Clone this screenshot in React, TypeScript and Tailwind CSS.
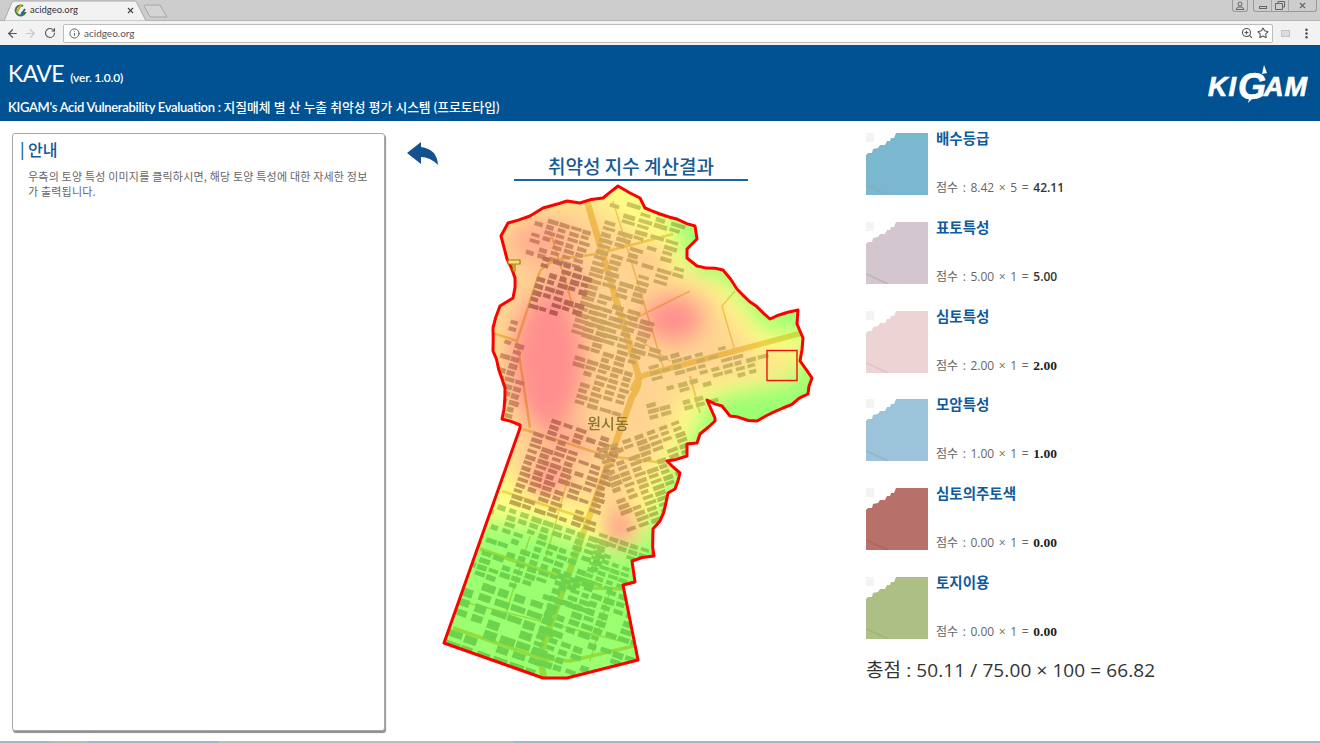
import { ArrowLeft, ArrowRight, Info, MoreVertical, RotateCw, Star, X, ZoomIn } from "lucide-react";

const outlinePts =
  "618,185 630,192 640,197 645,207 660,213 677,218 695,225 697,238 687,248 687,257 697,265 723,269 737,288 770,318 798,309 797,323 803,337 800,360 812,377 808,393 783,407 757,420 730,415 722,405 707,399 715,417 715,420 700,433 697,442 687,443 687,455 667,460 680,472 675,488 668,492 660,520 653,528 654,555 632,560 635,581 623,584 638,659 567,677 543,677 444,642 520,427 520,424 502,418 505,387 493,350 493,327 500,305 513,297 515,277 507,258 501,235 508,222 530,215 543,207 567,200 580,202 603,197"
    .split(" ")
    .map((p) => p.split(",").map(Number));

// small fixed-seed generator so the map stays the same between runs
function makeRandom(start: number) {
  let seed = start;
  return () => {
    seed = (seed * 16807) % 2147483647;
    return seed / 2147483647;
  };
}

// the boundary is hand-traced and a bit too clean, so roughen the northern part
function roughen() {
  const rnd = makeRandom(41);
  const out: string[] = [];
  outlinePts.forEach(([x, y], i) => {
    const [nx, ny] = outlinePts[(i + 1) % outlinePts.length];
    out.push(`${x},${y}`);
    const len = Math.hypot(nx - x, ny - y);
    if (y > 560 || ny > 560 || len < 12) return;
    const steps = Math.floor(len / 8);
    for (let s = 1; s < steps; s++) {
      const t = s / steps;
      out.push(`${(x + (nx - x) * t + (rnd() - 0.5) * 2.4).toFixed(1)},${(y + (ny - y) * t + (rnd() - 0.5) * 2.4).toFixed(1)}`);
    }
  });
  return out.join(" ");
}
const outline = roughen();

type Bld = { x: number; y: number; w: number; h: number; a: number; tone: string };

function makeBuildings() {
  const rnd = makeRandom(17);
  const out: Bld[] = [];
  const fill = (
    x0: number,
    y0: number,
    x1: number,
    y1: number,
    a: number,
    cw: number,
    ch: number,
    tone: string,
    skip = 0.2,
  ) => {
    const cx = (x0 + x1) / 2;
    const cy = (y0 + y1) / 2;
    const r = (a * Math.PI) / 180;
    for (let y = y0; y < y1; y += ch) {
      for (let x = x0; x < x1; x += cw) {
        if (rnd() < skip) continue;
        const w = cw * (0.6 + rnd() * 0.34);
        const h = ch * (0.55 + rnd() * 0.25);
        const dx = x + w / 2 - cx;
        const dy = y + h / 2 - cy;
        const px = cx + dx * Math.cos(r) - dy * Math.sin(r);
        const py = cy + dx * Math.sin(r) + dy * Math.cos(r);
        // open ground under the big hot spots, the village label and the east side
        if (px > 520 && px < 577 && py > 312 && py < 408) continue;
        if (px > 648 && px < 700 && py > 285 && py < 345) continue;
        if (px > 585 && px < 632 && py > 413 && py < 433) continue;
        if (px > 680 && py < 345) continue;
        if (px > 770) continue;
        if (px > 715 && py > 378) continue;
        out.push({ x: px - w / 2, y: py - h / 2, w, h, a, tone });
      }
    }
  };
  fill(590, 205, 672, 345, 17, 16, 6, "#cfc8ac");
  fill(530, 222, 590, 262, 17, 12, 6, "#cdb6ae");
  fill(535, 262, 590, 312, 17, 11, 7, "#b89c96");
  fill(496, 320, 522, 420, 17, 11, 7, "#cbb4ac");
  fill(575, 310, 640, 410, 17, 13, 6, "#ccc2a6");
  fill(640, 345, 770, 400, -15, 12, 6, "#ccceaa", 0.42);
  fill(522, 425, 610, 520, 19, 13, 6, "#c4aa9e");
  fill(610, 432, 692, 520, -20, 13, 6, "#ccc2a2");
  fill(472, 518, 600, 590, 19, 12, 7, "#b3d3a9");
  fill(590, 540, 650, 590, 19, 11, 6, "#bcd6a8");
  fill(450, 588, 540, 680, 19, 17, 11, "#b3d3a9");
  fill(540, 585, 640, 680, 19, 13, 8, "#b3d3a9");
  return out;
}
const buildings = makeBuildings();

const roads: { d: string; w: number }[] = [
  { d: "M587 200 L638 373 Q641 384 632 396 L540 653 L544 678", w: 6.5 },
  { d: "M802 332 L645 374 Q636 377 632 390", w: 5.5 },
  { d: "M480 548 L593 587 L622 588", w: 3.5 },
  { d: "M453 627 L543 658 L570 660 L634 645", w: 3.5 },
  { d: "M502 490 L587 518", w: 2.5 },
  { d: "M523 428 L607 455 L665 462", w: 2.5 },
  { d: "M540 270 Q546 262 560 258 L597 253 L673 233", w: 2.5 },
  { d: "M493 332 L517 340 L540 270", w: 2.5 },
  { d: "M517 340 L530 427", w: 2.5 },
  { d: "M550 230 L575 312", w: 2 },
  { d: "M613 200 L665 372", w: 1.5 },
  { d: "M630 320 L690 290", w: 1.5 },
  { d: "M641 340 L670 360", w: 1.5 },
  { d: "M735 290 L722 305 L735 350", w: 1.5 },
  { d: "M690 375 L700 412", w: 2 },
  { d: "M570 470 L545 560", w: 1.5 },
  { d: "M530 535 L505 615", w: 1.5 },
  { d: "M610 590 L590 660", w: 1.5 },
  { d: "M460 600 L620 640", w: 1.5 },
];

function HeatMap() {
  return (
    <svg viewBox="440 180 376 502" className="w-[376px] h-[502px] block">
      <defs>
        <clipPath id="area">
          <polygon points={outline} />
        </clipPath>
        <filter id="b14" x="-30%" y="-30%" width="160%" height="160%">
          <feGaussianBlur stdDeviation="14" />
        </filter>
        <filter id="b9" x="-30%" y="-30%" width="160%" height="160%">
          <feGaussianBlur stdDeviation="11" />
        </filter>
      </defs>
      <g clipPath="url(#area)">
        <rect x="440" y="180" width="376" height="502" fill="#9cff72" />
        <polygon
          filter="url(#b9)"
          fill="#ffff84"
          points="480,225 560,178 625,170 672,212 682,245 695,275 725,278 765,330 815,330 795,378 740,388 708,398 695,430 672,470 660,510 632,548 590,545 540,525 480,520 470,450 470,330"
        />
        <polygon
          filter="url(#b14)"
          fill="#ffd492"
          points="490,225 570,190 605,205 640,240 668,268 712,288 752,345 775,372 720,378 682,395 668,440 640,480 626,525 592,505 540,490 505,470 490,400 480,320"
        />
        <g filter="url(#b9)" fill="#ff8e8e">
          <ellipse cx="548" cy="360" rx="36" ry="68" />
          <ellipse cx="673" cy="318" rx="29" ry="22" />
          <ellipse cx="652" cy="255" rx="14" ry="9" opacity="0.5" />
          <ellipse cx="540" cy="240" rx="32" ry="22" opacity="0.55" />
          <ellipse cx="565" cy="285" rx="24" ry="22" opacity="0.55" />
          <ellipse cx="548" cy="478" rx="20" ry="14" />
          <ellipse cx="620" cy="526" rx="14" ry="18" />
          <ellipse cx="565" cy="440" rx="30" ry="18" opacity="0.5" />
          <ellipse cx="780" cy="362" rx="12" ry="10" opacity="0.35" />
        </g>
        <g style={{ mixBlendMode: "multiply" }}>
          {roads.map((r) => (
            <path key={r.d} d={r.d} fill="none" stroke="#efdc8a" strokeWidth={r.w} strokeLinejoin="round" />
          ))}
          {buildings.map((b, i) => (
            <rect
              key={i}
              x={b.x}
              y={b.y}
              width={b.w}
              height={b.h}
              fill={b.tone}
              transform={`rotate(${b.a} ${b.x + b.w / 2} ${b.y + b.h / 2})`}
            />
          ))}
        </g>
      </g>
      <polygon points={outline} fill="none" stroke="#ff0000" strokeWidth="3" strokeLinejoin="round" />
      <path d="M508 259 H520 V263 H515 V270 H513 V263 H508 Z" fill="#f5e27a" stroke="#a37a12" strokeWidth="1.2" />
      <text
        x="608"
        y="428"
        textAnchor="middle"
        fontSize="15"
        fontWeight="500"
        fill="#8a7630"
        style={{ fontFamily: '"Noto Sans CJK KR", sans-serif' }}
      >
        원시동
      </text>
      <rect x="767" y="349.5" width="30" height="30" fill="none" stroke="#f01010" strokeWidth="1.4" />
    </svg>
  );
}

function Thumb({ color, line }: { color: string; line: string }) {
  return (
    <svg viewBox="0 0 62 62" className="w-[62px] h-[62px] shrink-0">
      <rect width="8" height="9" fill="#f3f3f3" />
      <polygon
        points="0,22 2,20 6,20 7,16 12,15 14,12 19,12 21,8 24,8 25,5 28,5 30,0 62,0 62,62 0,62"
        fill={color}
      />
      <path d="M0 52 L22 62" stroke={line} strokeWidth="1.5" opacity="0.7" />
    </svg>
  );
}

const layers = [
  { name: "배수등급", color: "#7ab8d0", line: "#8aa9b5", formula: "8.42 × 5 = ", total: "42.11", serif: false },
  { name: "표토특성", color: "#d3c6ce", line: "#c0a9b0", formula: "5.00 × 1 = ", total: "5.00", serif: false },
  { name: "심토특성", color: "#edd4d4", line: "#e0bcbc", formula: "2.00 × 1 = ", total: "2.00", serif: true },
  { name: "모암특성", color: "#9bc4da", line: "#8db0c4", formula: "1.00 × 1 = ", total: "1.00", serif: true },
  { name: "심토의주토색", color: "#b8716a", line: "#ae5e55", formula: "0.00 × 1 = ", total: "0.00", serif: true },
  { name: "토지이용", color: "#aebf85", line: "#9cb070", formula: "0.00 × 1 = ", total: "0.00", serif: true },
];

function BrowserChrome() {
  return (
    <div className="shrink-0">
      <div className="h-[21px] bg-[#cdcdcd] relative border-b border-[#b4b4b4]">
        <svg className="absolute left-0 top-0" width="175" height="21">
          <path d="M4 21 L12 2 Q13 1 15 1 H134 Q136 1 137 3 L146 21 Z" fill="#f2f2f2" stroke="#a8a8a8" />
          <path d="M144 6 Q144 5 146 5 H160 L167 17 H150 Z" fill="#d4d4d4" stroke="#a6a6a6" />
          <path d="M23 6 A5 5 0 1 0 25 13 H21" fill="none" stroke="#3b7d3a" strokeWidth="2" />
          <path d="M17 12 L21 5" stroke="#d8a020" strokeWidth="2" />
          <path d="M21 15 L25 9" stroke="#2f5fb0" strokeWidth="2" />
        </svg>
        <span className="absolute left-[30px] top-[3px] text-[9.5px] leading-[14px] text-[#333]">acidgeo.org</span>
        <X className="absolute left-[126px] top-[6px] w-[9px] h-[9px] text-[#444]" strokeWidth={3} />
        <div className="absolute right-[72px] top-0 w-[16px] h-[12px] border border-t-0 border-[#9a9a9a] rounded-b-[3px] flex items-center justify-center">
          <svg width="10" height="9" viewBox="0 0 10 9">
            <circle cx="5" cy="3" r="2" fill="none" stroke="#666" />
            <path d="M1 8.5 H9 L7 6 H3 Z" fill="none" stroke="#666" />
          </svg>
        </div>
        <div className="absolute right-[3px] top-0 h-[12px] w-[64px] border border-t-0 border-[#9a9a9a] rounded-b-[3px] flex items-center">
          <div className="w-[18px] h-full border-r border-[#a6a6a6] flex items-end justify-center pb-[2px]">
            <div className="w-[8px] h-[3px] border border-[#666]" />
          </div>
          <div className="w-[17px] h-full border-r border-[#a6a6a6] flex items-center justify-center">
            <svg width="10" height="9" viewBox="0 0 10 9">
              <path d="M3 2 V.5 H9.5 V6 H8 M.5 2.5 H7.5 V8.5 H.5 Z" fill="none" stroke="#666" />
            </svg>
          </div>
          <div className="flex-1 flex items-center justify-center">
            <X className="w-[9px] h-[9px] text-[#666]" strokeWidth={3} />
          </div>
        </div>
      </div>
      <div className="h-[24px] bg-[#f2f2f2] flex items-center pl-[6px] pr-[7px]">
        <ArrowLeft className="w-[13px] h-[13px] text-[#555]" strokeWidth={2.2} />
        <ArrowRight className="w-[13px] h-[13px] text-[#c9c9c9] ml-[5px]" strokeWidth={2.2} />
        <RotateCw className="w-[12px] h-[12px] text-[#555] ml-[7px]" strokeWidth={2.2} />
        <div className="w-[1210px] h-[19px] ml-[7px] bg-white border border-[#bdbdbd] rounded-[2px] flex items-center pl-[5px] pr-[3px]">
          <Info className="w-[11px] h-[11px] text-[#555]" />
          <span className="text-[10px] text-[#555] ml-[4px]">acidgeo.org</span>
          <ZoomIn className="w-[12px] h-[12px] text-[#555] ml-auto" strokeWidth={2.2} />
          <Star className="w-[12px] h-[12px] text-[#555] ml-[4px]" strokeWidth={2.2} />
        </div>
        <div className="ml-[8px] w-[9px] h-[7px] bg-[#dcdcdc] border border-[#c4c4c4]" />
        <MoreVertical className="w-[13px] h-[13px] text-[#444] ml-auto" strokeWidth={2.6} />
      </div>
    </div>
  );
}

function Logo() {
  return (
    <div className="relative mr-[12px] mt-[7px] flex items-center text-white italic font-bold text-[27px] leading-[28px] [-webkit-text-stroke:0.7px_white] font-['Liberation_Sans',sans-serif]">
      <span className="tracking-[1px]">KI</span>
      <span className="text-[36px] leading-[28px] ml-[1px] -mr-[2px]">G</span>
      <span className="tracking-[1px]">AM</span>
      <svg className="absolute left-[30px] top-[-8px]" width="36" height="40" viewBox="0 0 36 40">
        <path d="M26 0 L24 9 L29 8 Z" fill="#fff" />
        <path d="M12 30 L17 31 L10 38 Z" fill="#fff" />
      </svg>
    </div>
  );
}

export default function App() {
  return (
    <div className="h-[743px] w-[1320px] overflow-hidden flex flex-col bg-white font-['Lato','Noto_Sans_CJK_KR',sans-serif]">
      <BrowserChrome />
      <header className="h-[76px] shrink-0 bg-[#005292] text-white flex items-center justify-between pl-[8px] pr-0">
        <div>
          <div className="text-[23px] leading-[30px] mt-[8px] tracking-[-0.6px] whitespace-nowrap">
            KAVE <span className="text-[12px] font-semibold ml-[1px] tracking-[-0.2px]">(ver. 1.0.0)</span>
          </div>
          <div className="text-[13px] leading-[18px] mt-[5px] font-semibold tracking-[-0.3px] whitespace-nowrap">
            KIGAM&apos;s Acid Vulnerability Evaluation :{" "}
            <span className="font-medium text-[12.75px] tracking-[0px]">
              지질매체 별 산 누출 취약성 평가 시스템 (프로토타입)
            </span>
          </div>
        </div>
        <Logo />
      </header>

      <main className="flex-1 flex min-h-0">
        <section className="w-[373px] h-[598px] ml-[12px] mt-[12px] shrink-0 bg-white border border-[#a9a9a9] rounded-[3px] shadow-[1px_2px_1px_#8e8e8e] pl-[7px] pt-[5px]">
          <h2 className="text-[16px] leading-[20px] font-medium text-[#0f5a9c] font-['Noto_Sans_CJK_KR',sans-serif]">
            | 안내
          </h2>
          <p className="mt-[10px] ml-[8px] text-[11px] leading-[15px] tracking-[0.2px] text-[#666] whitespace-nowrap font-['Noto_Sans_CJK_KR',sans-serif]">
            우측의 토양 특성 이미지를 클릭하시면, 해당 토양 특성에 대한 자세한 정보
            <br />
            가 출력됩니다.
          </p>
        </section>

        <section className="w-[428px] shrink-0 relative">
          <svg className="absolute left-[22px] top-[21px]" width="31" height="23" viewBox="0 0 31 23">
            <path d="M0 11 L14 0 V5 Q30 7 31 23 Q23 15 14 15 V22 Z" fill="#14528f" />
          </svg>
          <h1 className="ml-[129px] mt-[33px] w-[234px] text-center text-[19px] leading-[24px] pb-[1px] font-medium text-[#1a5a94] border-b-2 border-[#1a64a8] font-['Noto_Sans_CJK_KR',sans-serif]">
            취약성 지수 계산결과
          </h1>
          <div className="ml-[55px]">
            <HeatMap />
          </div>
        </section>

        <section className="ml-[53px] pt-[12px] font-['Open_Sans','Noto_Sans_CJK_KR',sans-serif]">
          {layers.map((l) => (
            <div key={l.name} className="flex h-[88.8px]">
              <Thumb color={l.color} line={l.line} />
              <div className="ml-[8px] h-[62px] flex flex-col justify-between">
                <div className="text-[14.5px] leading-[14px] -mt-[2px] font-bold text-[#0f5a9c] font-['Noto_Sans_CJK_KR',sans-serif]">
                  {l.name}
                </div>
                <div className="text-[12px] leading-[16px] text-[#666] whitespace-nowrap mb-[-1px] [word-spacing:1.5px]">
                  점수 : {l.formula}
                  <span
                    className={
                      l.serif
                        ? "text-[#222] font-['Liberation_Serif',serif] font-bold text-[13.5px]"
                        : "text-[#333] font-semibold"
                    }
                  >
                    {l.total}
                  </span>
                </div>
              </div>
            </div>
          ))}
          <div className="text-[19px] leading-[24px] text-[#333] -mt-[8px] tracking-[0.1px] whitespace-nowrap">
            총점 : 50.11 / 75.00 × 100 = 66.82
          </div>
        </section>
      </main>

      <div className="h-[2px] shrink-0 bg-[#a4b6cc] flex pl-[52px] gap-[130px]">
        <div className="w-[36px] bg-[#b9b9b9]" />
        <div className="w-[295px] bg-[#bdbdbd]" />
      </div>
    </div>
  );
}
